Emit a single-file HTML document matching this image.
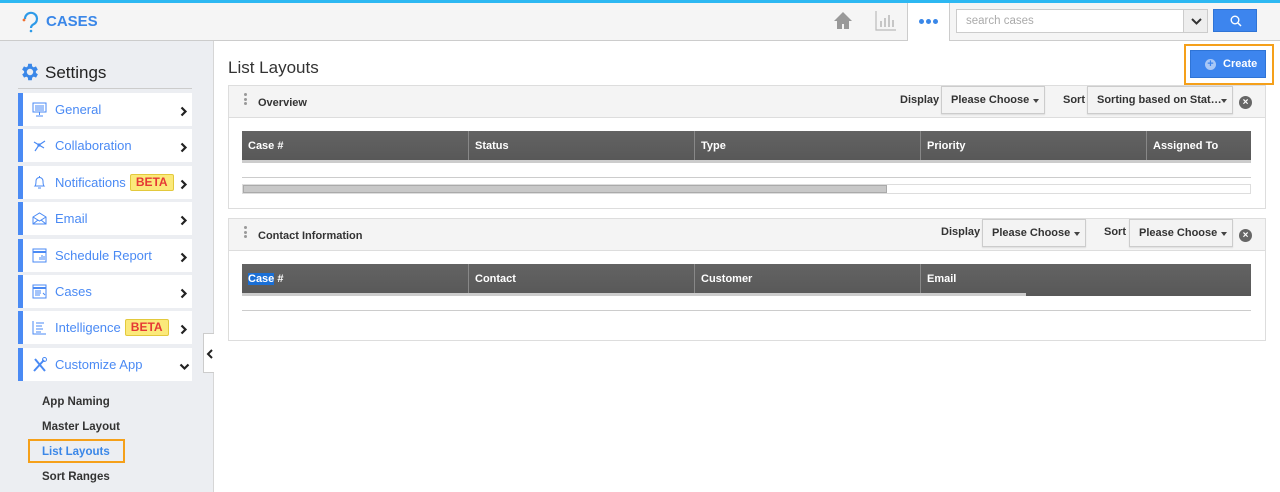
<!DOCTYPE html>
<html><head><meta charset="utf-8"><style>
*{box-sizing:border-box;margin:0;padding:0}
body{width:1280px;height:492px;overflow:hidden;font-family:"Liberation Sans",sans-serif;background:#fff;position:relative;font-size:13px;color:#333}
.abs{position:absolute}
#top{left:0;top:0;width:1280px;height:41px;background:#f5f5f5;border-bottom:1px solid #ccc}
#topline{left:0;top:0;width:1280px;height:3px;background:#2db8f2}
#side{left:0;top:41px;width:214px;height:451px;background:#eceef2;border-right:1px solid #d6d6d6}
.item{position:absolute;left:18px;width:174px;height:33px;background:#fff;border-left:5px solid #4a8af4;color:#4a8af4;font-size:13px;line-height:33px;padding-left:32px}
.item svg.ic{position:absolute;left:9px;top:9px}
.item svg.ch{position:absolute;right:4px;top:13px}
.beta{display:inline-block;background:#fbe97a;border:1px solid #e3c93c;color:#e53935;font-weight:bold;font-size:12px;line-height:15px;padding:0 5px;border-radius:2px;margin-left:4px;vertical-align:1px}
.sub{position:absolute;left:42px;font-weight:bold;font-size:11.5px;color:#333}
.panel{position:absolute;left:228px;width:1038px;border:1px solid #ddd;background:#fff}
.ph{height:32px;background:#f4f4f4;border-bottom:1px solid #ddd;position:relative}
.ph .t{position:absolute;left:29px;top:11px;font-weight:bold;font-size:11px;color:#333}
.dots{position:absolute;left:15px;top:7px;width:3px}
.dots i{display:block;width:3px;height:3px;border-radius:50%;background:#999;margin-bottom:1.5px}
.lbl{position:absolute;font-weight:bold;font-size:11px;color:#333}
.sel{position:absolute;height:28px;border:1px solid #ccc;background:#f3f3f3;font-weight:bold;font-size:11px;color:#333;line-height:27px;padding-left:9px;box-shadow:0 1px 1px #ddd}
.sel:after{content:"";position:absolute;right:5px;top:12px;border-left:3.5px solid transparent;border-right:3.5px solid transparent;border-top:4px solid #444}
.x{position:absolute;width:13px;height:13px;border-radius:50%;background:#666;color:#fff;font-size:10px;font-weight:bold;line-height:13px;text-align:center}
.th{position:absolute;left:13px;width:1009px;height:32px;background:linear-gradient(#636363,#585858);border-bottom:3px solid #ccc}
.th div{position:absolute;top:0;height:29px;line-height:31px;color:#fff;font-weight:bold;font-size:11px;padding-left:6px;border-left:1px solid #888}
</style></head><body>
<div id="top" class="abs"></div><div id="topline" class="abs"></div>
<svg class="abs" style="left:21px;top:11px" width="20" height="22" viewBox="0 0 20 22"><path d="M4 8a6 6 0 1 1 9 5c-2 1-3 2-3 4" fill="none" stroke="#2d9ae8" stroke-width="2.2"/><circle cx="10" cy="20" r="1.3" fill="#2d9ae8"/><circle cx="3" cy="9" r="1.4" fill="#f07030"/></svg>
<div class="abs" style="left:46px;top:13px;font-weight:bold;font-size:15px;color:#3a87e8">CASES</div>
<svg class="abs" style="left:833px;top:11px" width="20" height="19" viewBox="0 0 20 19"><path d="M10 1L1 10h3v8h5v-5h2v5h5v-8h3z" fill="#999"/></svg>
<svg class="abs" style="left:875px;top:10px" width="22" height="21" viewBox="0 0 22 21"><path d="M1 1v19h20" fill="none" stroke="#bbb" stroke-width="1.2"/><path d="M6 17v-6M10 17v-9M14 17v-12M18 17v-7" stroke="#bbb" stroke-width="1.6"/></svg>
<div class="abs" style="left:907px;top:3px;width:43px;height:38px;background:#fff;border-left:1px solid #ccc;border-right:1px solid #ccc"></div>
<div class="abs" style="left:919px;top:19px;width:20px;height:5px"><i style="position:absolute;left:0;width:5px;height:5px;border-radius:50%;background:#3a87e8"></i><i style="position:absolute;left:7px;width:5px;height:5px;border-radius:50%;background:#3a87e8"></i><i style="position:absolute;left:14px;width:5px;height:5px;border-radius:50%;background:#3a87e8"></i></div>
<div class="abs" style="left:956px;top:9px;width:252px;height:24px;background:#fff;border:1px solid #ccc;color:#aaa;font-size:11.5px;line-height:23px;padding-left:9px">search cases</div>
<div class="abs" style="left:1183px;top:9px;width:25px;height:24px;background:#eee;border:1px solid #ccc"><svg style="position:absolute;left:7px;top:8px" width="11" height="7"><path d="M1 1l4.5 4.5L10 1" fill="none" stroke="#333" stroke-width="2"/></svg></div>
<div class="abs" style="left:1213px;top:9px;width:44px;height:23px;background:#3d85ee;border:1px solid #2f74d6"><svg style="position:absolute;left:16px;top:5px" width="12" height="12"><circle cx="5" cy="5" r="3.8" fill="none" stroke="#fff" stroke-width="1.4"/><path d="M8 8l3 3" stroke="#fff" stroke-width="1.5"/></svg></div>

<div id="side" class="abs"></div>
<svg class="abs" style="left:19px;top:61px" width="22" height="22" viewBox="0 0 24 24"><path fill="#3a87e8" d="M19.4 13a7.5 7.5 0 0 0 0-2l2.1-1.6-2-3.5-2.5 1a7.5 7.5 0 0 0-1.7-1L15 3h-4l-.4 2.9a7.5 7.5 0 0 0-1.7 1l-2.5-1-2 3.5L6.6 11a7.5 7.5 0 0 0 0 2l-2.1 1.6 2 3.5 2.5-1a7.5 7.5 0 0 0 1.7 1L11 21h4l.4-2.9a7.5 7.5 0 0 0 1.7-1l2.5 1 2-3.5zM13 15.5a3.5 3.5 0 1 1 0-7 3.5 3.5 0 0 1 0 7z" transform="translate(-1 0)"/></svg>
<div class="abs" style="left:45px;top:63px;font-size:17px;color:#222">Settings</div>
<div class="abs" style="left:18px;top:88px;width:174px;height:1px;background:#ccc"></div>

<div class="item" style="top:93px"><svg class="ic" width="15" height="15"><rect x="1" y="1" width="13" height="9" fill="none" stroke="#4a8af4"/><path d="M3 4h9M3 6h9M3 8h9M7.5 10v3M4 14h7" stroke="#4a8af4"/></svg>General<svg class="ch" width="8" height="11"><path d="M1.5 1.5l4 4-4 4" fill="none" stroke="#222" stroke-width="2.2"/></svg></div>
<div class="item" style="top:129px"><svg class="ic" width="15" height="15"><path d="M7 7L2 4M7 7l6-4M7 7l-4 6M7 7l5 3" stroke="#4a8af4" stroke-width="1.2"/><circle cx="7" cy="7" r="1.6" fill="#4a8af4"/></svg>Collaboration<svg class="ch" width="8" height="11"><path d="M1.5 1.5l4 4-4 4" fill="none" stroke="#222" stroke-width="2.2"/></svg></div>
<div class="item" style="top:166px"><svg class="ic" width="15" height="15"><path d="M3 11c1-1 1-3 1-5a3.5 3.5 0 0 1 7 0c0 2 0 4 1 5zM6 13h3M7.5 1v1" fill="none" stroke="#4a8af4"/></svg>Notifications<span class="beta">BETA</span><svg class="ch" width="8" height="11"><path d="M1.5 1.5l4 4-4 4" fill="none" stroke="#222" stroke-width="2.2"/></svg></div>
<div class="item" style="top:202px"><svg class="ic" width="15" height="15"><path d="M1 6l6.5-4L14 6v7H1zM1 6l6.5 4L14 6M1 13l5-4M14 13l-5-4" fill="none" stroke="#4a8af4"/></svg>Email<svg class="ch" width="8" height="11"><path d="M1.5 1.5l4 4-4 4" fill="none" stroke="#222" stroke-width="2.2"/></svg></div>
<div class="item" style="top:239px"><svg class="ic" width="15" height="15"><rect x="1" y="1" width="13" height="13" fill="none" stroke="#4a8af4"/><path d="M1 4h13" stroke="#4a8af4" stroke-width="2"/><path d="M8 12V9M10 12V7M12 12V8" stroke="#4a8af4"/></svg>Schedule Report<svg class="ch" width="8" height="11"><path d="M1.5 1.5l4 4-4 4" fill="none" stroke="#222" stroke-width="2.2"/></svg></div>
<div class="item" style="top:275px"><svg class="ic" width="15" height="15"><rect x="1" y="1" width="13" height="13" fill="none" stroke="#4a8af4"/><path d="M1 4h13" stroke="#4a8af4" stroke-width="2"/><path d="M3 7h6M3 9h6M3 11h5M11 9l2 2" stroke="#4a8af4"/></svg>Cases<svg class="ch" width="8" height="11"><path d="M1.5 1.5l4 4-4 4" fill="none" stroke="#222" stroke-width="2.2"/></svg></div>
<div class="item" style="top:311px"><svg class="ic" width="15" height="15"><path d="M1 1v13h13M4 3h8M4 6h6M4 9h7M4 12h5" fill="none" stroke="#4a8af4"/></svg>Intelligence<span class="beta">BETA</span><svg class="ch" width="8" height="11"><path d="M1.5 1.5l4 4-4 4" fill="none" stroke="#222" stroke-width="2.2"/></svg></div>
<div class="item" style="top:348px"><svg class="ic" width="15" height="16"><path d="M2 14L12 3M3 2l10 12" stroke="#4a8af4" stroke-width="2"/><circle cx="12.5" cy="2.5" r="2" fill="none" stroke="#4a8af4"/></svg>Customize App<svg class="ch" width="11" height="8" style="right:2px;top:15px"><path d="M1.5 1.5l4 4 4-4" fill="none" stroke="#222" stroke-width="2.2"/></svg></div>

<div class="sub" style="top:396px">App Naming</div>
<div class="sub" style="top:421px">Master Layout</div>
<div class="abs" style="left:28px;top:439px;width:97px;height:24px;border:2px solid #f5a01a"></div>
<div class="sub" style="top:446px;color:#3a87e8">List Layouts</div>
<div class="sub" style="top:471px">Sort Ranges</div>
<div class="abs" style="left:203px;top:333px;width:11px;height:40px;background:#fff;border:1px solid #ccc;border-right:none"><svg style="position:absolute;left:2px;top:15px" width="7" height="10"><path d="M6 1L2 5l4 4" fill="none" stroke="#222" stroke-width="2"/></svg></div>

<div class="abs" style="left:228px;top:58px;font-size:17px;color:#333">List Layouts</div>
<div class="abs" style="left:1184px;top:44px;width:90px;height:41px;border:2px solid #f5a01a"></div>
<div class="abs" style="left:1190px;top:50px;width:76px;height:28px;background:#3d85ee;border:1px solid #2f74d6;color:#fff;font-weight:bold;font-size:11px;line-height:27px;padding-left:32px">Create<span style="position:absolute;left:14px;top:8px;width:11px;height:11px;border-radius:50%;background:#a9c8f6;color:#3d85ee;font-size:11px;line-height:11px;text-align:center">+</span></div>

<div class="panel" style="top:85px;height:124px">
 <div class="ph"><div class="dots"><i></i><i></i><i></i></div><div class="t">Overview</div>
  <div class="lbl" style="left:671px;top:8px">Display</div>
  <div class="sel" style="left:712px;top:0;width:104px">Please Choose</div>
  <div class="lbl" style="left:834px;top:8px">Sort</div>
  <div class="sel" style="left:858px;top:0;width:146px">Sorting based on Stat…</div>
  <div class="x" style="left:1010px;top:10px">×</div>
 </div>
 <div class="th" style="top:45px"><div style="left:0;border:none;width:226px">Case #</div><div style="left:226px;width:226px">Status</div><div style="left:452px;width:226px">Type</div><div style="left:678px;width:226px">Priority</div><div style="left:904px;width:105px">Assigned To</div></div>
 <div class="abs" style="left:13px;top:91px;width:1009px;height:1px;background:#ccc"></div>
 <div class="abs" style="left:13px;top:98px;width:1009px;height:10px;border:1px solid #ddd"><div style="width:644px;height:8px;background:#c8c8c8;border:1px solid #aaa"></div></div>
</div>

<div class="panel" style="top:218px;height:123px">
 <div class="ph"><div class="dots"><i></i><i></i><i></i></div><div class="t">Contact Information</div>
  <div class="lbl" style="left:712px;top:7px">Display</div>
  <div class="sel" style="left:753px;top:0;width:104px">Please Choose</div>
  <div class="lbl" style="left:875px;top:7px">Sort</div>
  <div class="sel" style="left:900px;top:0;width:104px">Please Choose</div>
  <div class="x" style="left:1010px;top:10px">×</div>
 </div>
 <div class="th" style="top:45px;border-bottom:none;height:32px"><div style="left:0;border:none;width:226px"><span style="background:#1a6fd6">Case</span> #</div><div style="left:226px;width:226px">Contact</div><div style="left:452px;width:226px">Customer</div><div style="left:678px;width:331px;height:32px">Email</div></div>
 <div class="abs" style="left:13px;top:74px;width:784px;height:3px;background:#ccc"></div>
 <div class="abs" style="left:13px;top:91px;width:1009px;height:1px;background:#ccc"></div>
</div>
</body></html>
